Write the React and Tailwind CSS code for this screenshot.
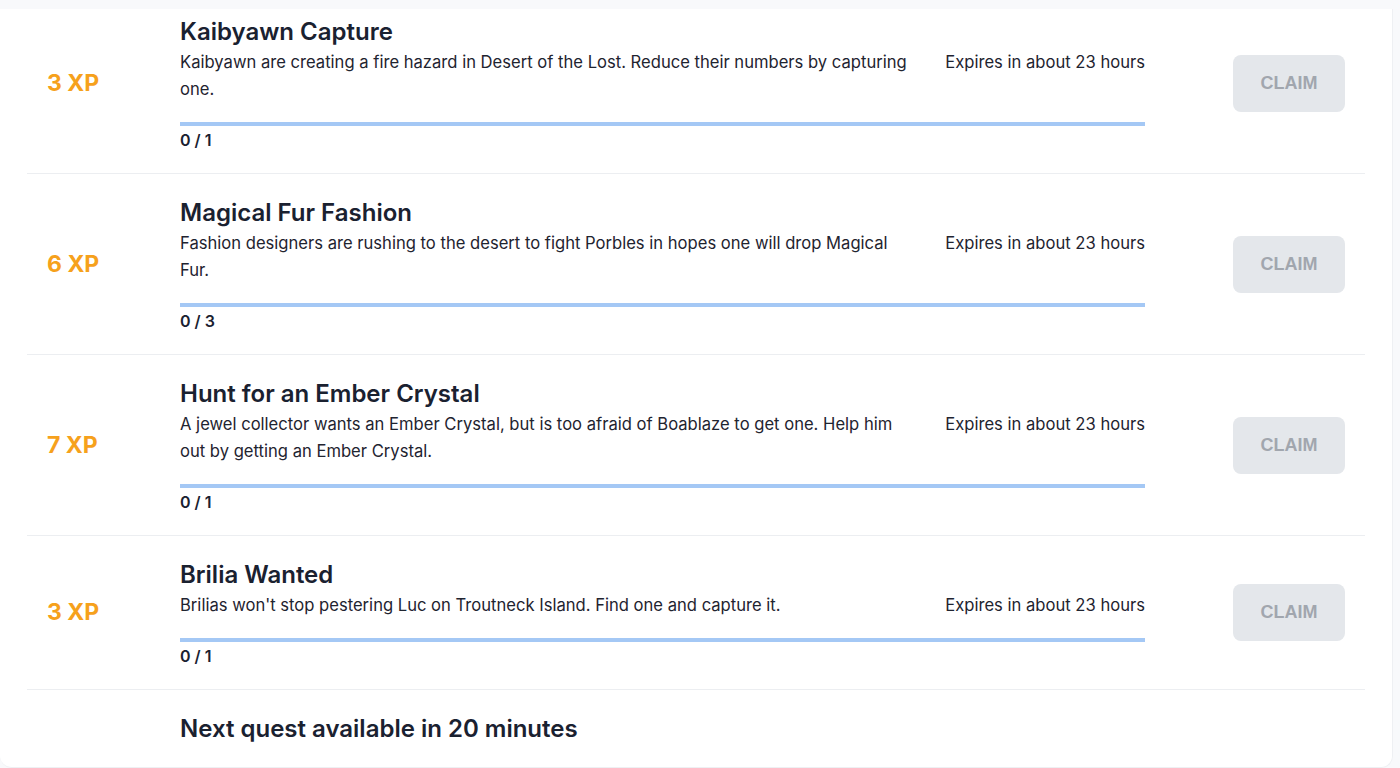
import React from 'react';

const quests = [
    {
        xp: 3,
        title: 'Kaibyawn Capture',
        text: 'Kaibyawn are creating a fire hazard in Desert of the Lost. Reduce their numbers by capturing one.',
        goal: 1,
    },
    {
        xp: 6,
        title: 'Magical Fur Fashion',
        text: 'Fashion designers are rushing to the desert to fight Porbles in hopes one will drop Magical Fur.',
        goal: 3,
    },
    {
        xp: 7,
        title: 'Hunt for an Ember Crystal',
        text: 'A jewel collector wants an Ember Crystal, but is too afraid of Boablaze to get one. Help him out by getting an Ember Crystal.',
        goal: 1,
    },
    {
        xp: 3,
        title: 'Brilia Wanted',
        text: "Brilias won't stop pestering Luc on Troutneck Island. Find one and capture it.",
        goal: 1,
    },
];

function QuestRow({ quest, first }) {
    return (
        <div
            className={`flex items-center border-b border-[#eceef1] ${first ? '-mt-[16px]' : ''}`}
        >
            <div className="w-[153px] pl-5 text-[23px] font-bold text-[#f6a11c]">
                {quest.xp} XP
            </div>
            <div className="w-[965px] pt-[25px] pb-[23px]">
                <h3 className="text-[24px] leading-[28px] font-semibold text-[#1a2130]">
                    {quest.title}
                </h3>
                <div className="mt-[3px] flex gap-8 text-[16.6px] leading-[27px] text-[#1f2430]">
                    <p className="flex-1">{quest.text}</p>
                    <span className="whitespace-nowrap">Expires in about 23 hours</span>
                </div>
                <div className="mt-[19px] h-1 bg-[#a4c8f5]"></div>
                <div className="mt-1 text-[16px] leading-5 font-semibold text-[#1a2130]">
                    0 / {quest.goal}
                </div>
            </div>
            <div className="flex flex-1 justify-end pr-5">
                <button
                    disabled
                    className="h-[57px] w-[112px] rounded-lg bg-[#e4e7eb] text-[18px] font-bold text-[#a1a6ae]"
                    style={{ fontFamily: '"Liberation Sans", Arial, sans-serif' }}
                >
                    CLAIM
                </button>
            </div>
        </div>
    );
}

export default function App() {
    return (
        <div
            className="h-[768px] overflow-hidden bg-[#f8f9fb]"
            style={{ fontFamily: 'Inter, "Noto Sans", sans-serif' }}
        >
            <div className="h-[9px]"></div>
            <div className="mr-[7px] overflow-hidden rounded-b-xl border-r border-b border-[#eef0f3] bg-white px-[27px]">
                {quests.map((quest, i) => (
                    <QuestRow key={quest.title} quest={quest} first={i === 0} />
                ))}
                <div className="pl-[153px] pt-[25px] pb-6 text-[24px] leading-[28px] font-semibold text-[#1a2130]">
                    Next quest available in 20 minutes
                </div>
            </div>
        </div>
    );
}
